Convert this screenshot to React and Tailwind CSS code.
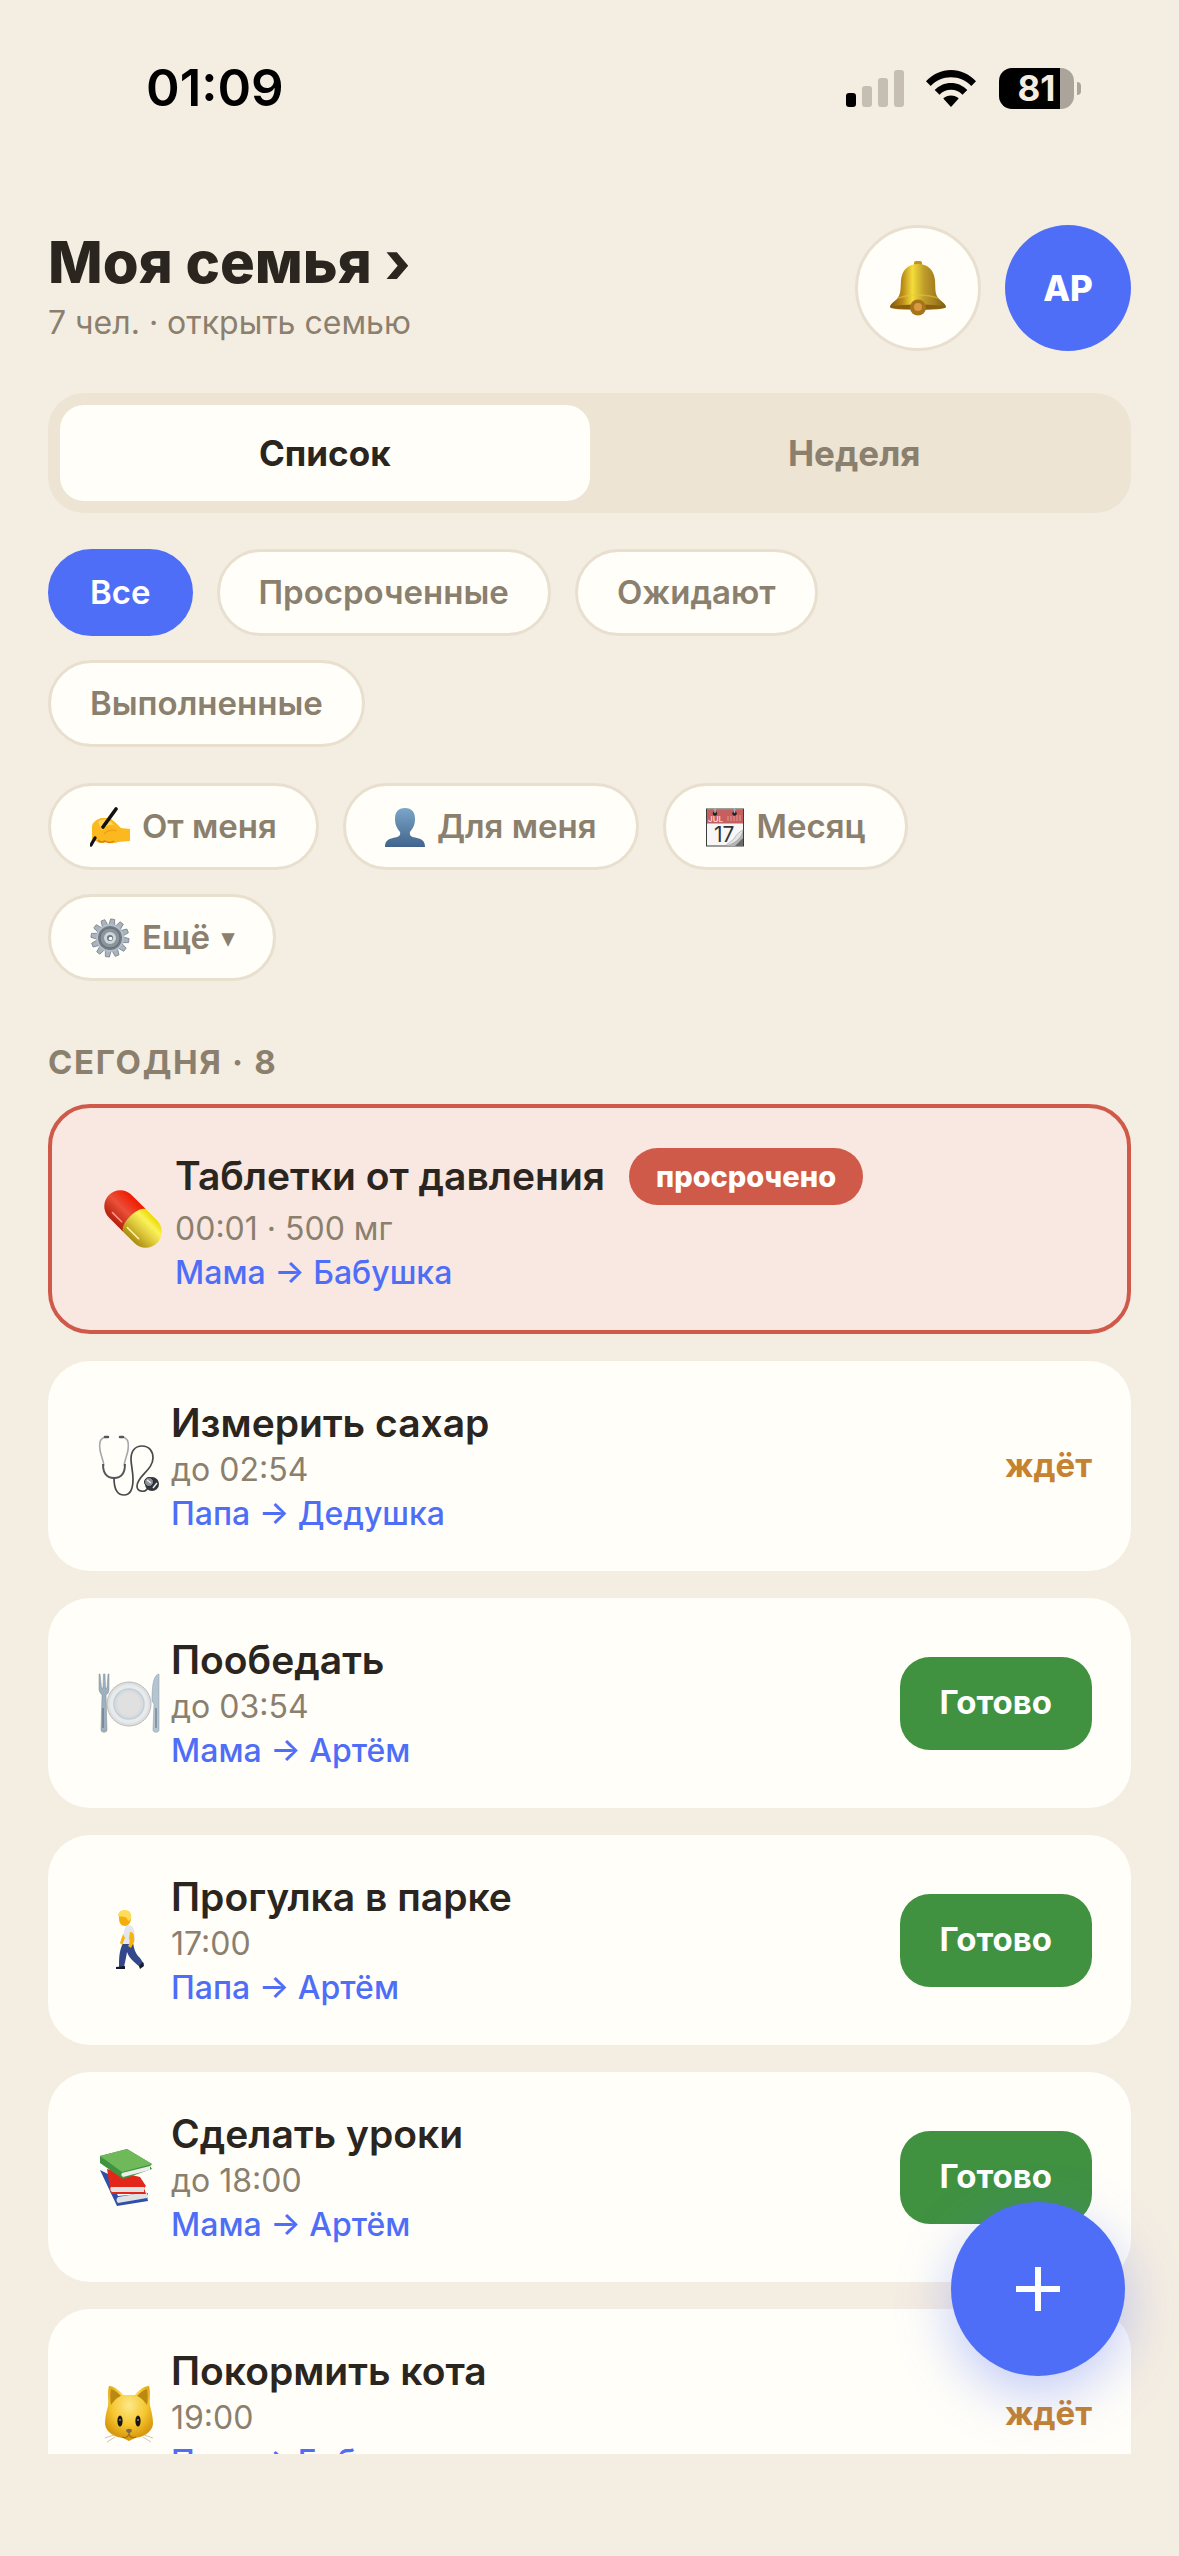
// src/App.jsx
import React, { useState } from 'react';

/* ---------- Icons ---------- */

const SignalIcon = () => (
  <svg className="w-[58px] h-[37px]" viewBox="0 0 58 37" aria-hidden="true">
    <rect x="0" y="23" width="10" height="14" rx="3" fill="#000" />
    <rect x="16" y="16" width="10" height="21" rx="3" fill="#c6beb3" />
    <rect x="32" y="8" width="10" height="29" rx="3" fill="#c6beb3" />
    <rect x="48" y="0" width="10" height="37" rx="3" fill="#c6beb3" />
  </svg>
);

const WifiIcon = () => (
  <svg className="w-[50px] h-[37px]" viewBox="0 0 50 37" aria-hidden="true">
    <path d="M0 11.2C6.8 4 15.500 0 25 0s18.200 4 25 11.200l-4.700 4.700C40 10.400 32.900 7.300 25 7.300S10 10.400 4.700 15.900z" />
    <path d="M8.700 20C13 15.500 18.700 12.900 25 12.900S37 15.500 41.300 20l-4.800 4.800C33.400 21.600 29.500 19.800 25 19.800s-8.400 1.800-11.500 5z" />
    <path d="M17.300 28.600c2-2 4.700-3.200 7.700-3.200s5.700 1.200 7.700 3.200L25 37z" />
  </svg>
);

const BellIcon = () => (
  <svg className="w-[56px] h-[56px]" viewBox="0 0 56 56" aria-hidden="true">
    <defs>
      <linearGradient id="bell" x1="0" x2="1">
        <stop offset="0" stopColor="#84560c" />
        <stop offset="0.22" stopColor="#b98a18" />
        <stop offset="0.4" stopColor="#f4dd3a" />
        <stop offset="0.62" stopColor="#bd9a28" />
        <stop offset="0.8" stopColor="#a58120" />
        <stop offset="1" stopColor="#7d5c10" />
      </linearGradient>
    </defs>
    <rect x="24" y="1" width="8" height="6" rx="2" fill="#c2941c" />
    <path d="M28 4c11 0 16 7 17 16 .6 9-.5 14 4 19 3 3 7 5 7 8 0 2-12 3-28 3S0 49 0 47c0-3 4-5 7-8 4-5 3.500-10 4-19C12 11 17 4 28 4z" fill="url(#bell)" />
    <ellipse cx="28" cy="47" rx="26" ry="2.500" fill="#8a5f10" />
    <path d="M8 38c12-4 28-4 40 0" fill="none" stroke="#e9c94a" strokeWidth="1.500" opacity="0.5" />
    <circle cx="28" cy="47.500" r="8" fill="#a8741a" />
    <circle cx="28" cy="47" r="4" fill="#d99a45" />
  </svg>
);

const WritingIcon = () => (
  <svg className="w-[40px] h-[40px]" viewBox="0 0 40 40" aria-hidden="true">
    <path d="M2 35V19c1-4 4-6 9-8h9l6 5 5 5 9 1v12l-12 1c-4 2-9 1-12 0-3 2-8 1-10-1z" fill="#fbb91f" />
    <path d="M8 15c4-3 8-3 12-1l4 4c-5-1-8 1-12 5z" fill="#ffd75a" />
    <path d="M14 27c4-4 8-5 13-3" fill="none" stroke="#f09d14" strokeWidth="1.300" />
    <path d="M8 33c2 3 5 2 7 1 3 2 6 2 9 0" fill="none" stroke="#d97f12" strokeWidth="1.500" />
    <path d="M26 2L13 20" stroke="#111" strokeWidth="3.600" strokeLinecap="round" />
    <path d="M5 31L1 38" stroke="#111" strokeWidth="3.200" strokeLinecap="round" />
  </svg>
);

const PersonIcon = () => (
  <svg className="w-[40px] h-[40px]" viewBox="0 0 40 40" aria-hidden="true">
    <defs>
      <linearGradient id="person" x1="0" y1="0" x2="0" y2="1">
        <stop offset="0" stopColor="#7ba6c9" />
        <stop offset="1" stopColor="#41648c" />
      </linearGradient>
    </defs>
    <path d="M20 1c7 0 10 4 10 11 0 6-2 9-5 13-1 4 2 5 7 6 5 1 8 3 8 9H0c0-6 3-8 8-9 5-1 8-2 7-6-3-4-5-7-5-13C10 5 13 1 20 1z" fill="url(#person)" />
  </svg>
);

const CalendarIcon = () => (
  <svg className="w-[40px] h-[40px]" viewBox="0 0 40 40" aria-hidden="true">
    <rect x="1.500" y="2" width="37" height="37" fill="#f7f7f7" stroke="#3c3c3c" />
    <rect x="2" y="2.500" width="36" height="14" fill="#c5605f" />
    <text x="3" y="15" fontSize="8" fill="#f5d5d3" fontFamily="Inter, sans-serif">JUL</text>
    <path d="M23 14V9M26 14V9M29 14V9M32 14V8M35 14V8" stroke="#d98583" strokeWidth="1.500" />
    <path d="M38 24c-3 8-9 13-18 15h18z" fill="#b4b4b4" />
    <path d="M38 23c-5 3-7 5-9 9l-9 7c10-2 17-8 18-16z" fill="#e6e6e6" stroke="#8a8a8a" strokeWidth="0.500" />
    <path d="M38 31l-8 8h8z" fill="#6a6a6a" />
    <text x="9" y="35" fontSize="21" fontWeight="400" fill="#333" fontFamily="Inter, sans-serif">17</text>
    <circle cx="10" cy="6.500" r="2.200" fill="#222" />
    <circle cx="29.500" cy="6.500" r="2.200" fill="#222" />
    <path d="M10 6V1M29.500 6V1" stroke="#9db2bb" strokeWidth="1.500" />
  </svg>
);

const teeth = [0, 30, 60, 90, 120, 150, 180, 210, 240, 270, 300, 330];

const GearIcon = () => (
  <svg className="w-[40px] h-[40px]" viewBox="0 0 40 40" aria-hidden="true">
    {teeth.map((angle) => (
      <path key={angle} d="M17 8l1-7h4l1 7z" fill="#aab4bf" stroke="#6d7681" strokeWidth="0.700" transform={`rotate(${angle + 8} 20 20)`} />
    ))}
    <circle cx="20" cy="20" r="14" fill="#b3bdc8" />
    <circle cx="20" cy="20" r="12" fill="#737b85" />
    <circle cx="20" cy="20" r="10" fill="#8b939b" stroke="#666d75" />
    <circle cx="20" cy="20" r="6" fill="#cdd5dd" />
    <circle cx="20" cy="20" r="3" fill="#6b737c" />
    <circle cx="20.500" cy="20.500" r="1.800" fill="#fff" />
  </svg>
);

const PillIcon = () => (
  <svg className="w-[60px] h-[60px]" viewBox="0 0 60 60" aria-hidden="true">
    <defs>
      <linearGradient id="pillRed" x1="0" y1="0" x2="1" y2="0">
        <stop offset="0" stopColor="#b51f0d" />
        <stop offset="0.5" stopColor="#ea5039" />
        <stop offset="1" stopColor="#f01a00" />
      </linearGradient>
      <linearGradient id="pillYellow" x1="0" y1="0" x2="1" y2="0">
        <stop offset="0" stopColor="#a98a10" />
        <stop offset="0.4" stopColor="#dcc63a" />
        <stop offset="0.75" stopColor="#fbf35a" />
        <stop offset="1" stopColor="#ecd900" />
      </linearGradient>
    </defs>
    <g transform="rotate(-45 30 30)">
      <path d="M14 32V12a16 16 0 0 1 32 0v20z" fill="url(#pillRed)" />
      <path d="M14 32c3-8 29-8 32 0v16a16 16 0 0 1-32 0z" fill="url(#pillYellow)" />
      <path d="M20 11v13" stroke="#fa9a86" strokeWidth="1.500" strokeLinecap="round" />
      <path d="M20 32v16" stroke="#fff9a8" strokeWidth="1.500" strokeLinecap="round" />
    </g>
  </svg>
);

const StethoscopeIcon = () => (
  <svg className="w-[62px] h-[62px]" viewBox="0 0 62 62" fill="none" aria-hidden="true">
    <path d="M8 2C2 3 1 7 2 15c1 6 3 9 4 16M24 2c6 1 7 5 6 13-1 6-3 9-4 16" stroke="#a6a8ae" strokeWidth="1.600" />
    <path d="M5 29c0 9 4 14 11 14s11-5 11-14" stroke="#55565a" strokeWidth="1.900" />
    <path d="M16 43c0 10 3 17 10 17s9-6 9-16c0-8-2-14-2-20 0-8 4-13 11-13s11 5 11 12c0 12-16 18-16 28 0 6 8 7 11 2" stroke="#4a4a4c" strokeWidth="1.700" />
    <path d="M7 2h3M22 2h3" stroke="#55565a" strokeWidth="2.500" strokeLinecap="round" />
    <circle cx="54" cy="49" r="7" fill="#33363b" />
    <circle cx="51" cy="47" r="4.500" fill="#8d9299" stroke="#26282c" />
    <path d="M49 45l4 3M55 53l4-5" stroke="#e9edf0" strokeWidth="1.500" />
  </svg>
);

const PlateIcon = () => (
  <svg className="w-[62px] h-[62px]" viewBox="0 0 62 62" aria-hidden="true">
    <circle cx="31" cy="32" r="22" fill="#dcdedf" stroke="#b9bcbf" />
    <circle cx="31" cy="32" r="19.500" fill="#e9eaea" />
    <circle cx="31" cy="32" r="15" fill="#d9dadb" stroke="#c0d0dd" strokeWidth="1.500" />
    <circle cx="31" cy="32" r="12" fill="#e0e0e0" />
    <path d="M1 2v15c0 3 2 5 3 6l-1 35c0 3 6 3 6 0L8 23c2-1 3-3 3-6V2h-1l-1 14H7.500L7 2H5.500L5 16H3.500L2 2z" fill="#9eb0bd" stroke="#7c8c98" strokeWidth="0.500" />
    <path d="M61 2c-5 1-7 9-7 27l2 3-1 26c0 3 6 3 6 0z" fill="#b4c5d1" stroke="#8494a0" strokeWidth="0.500" />
    <path d="M5 36v20M58 36v20" stroke="#56697a" strokeWidth="1" />
  </svg>
);

const WalkIcon = () => (
  <svg className="w-[60px] h-[60px]" viewBox="0 0 60 60" aria-hidden="true">
    <path d="M24 33l10-1c1 7 2 11 7 16l4 6-4 3c-7-6-11-9-13-15-1 6-2 10-3 15h-5c0-8 0-16 4-24z" fill="#33488a" />
    <path d="M17 57l9-1v3h-9zM40 56l4-4 1 4-4 3z" fill="#161a2c" />
    <path d="M27 16c4-2 7 0 8 4 1 6 1 9 0 14l-11 0c0-7 0-13 3-18z" fill="#e3e6ee" />
    <path d="M31 22c3 0 4 2 4 5 1 5-1 7-3 11l-3-2c2-3 2-5 1-8zM24 24l-3 9 2 2 3-7z" fill="#f6b40e" />
    <path d="M20 8c0-5 2-7 6-7s6 3 6 7c0 5-3 8-6 8-4 0-6-3-6-8z" fill="#f3ae0c" />
    <path d="M19 6c0-4 3-6 7-6 5 0 7 4 6 9l-2 2c-2-1-2-4-4-4z" fill="#ffdb58" />
  </svg>
);

const BooksIcon = () => (
  <svg className="w-[60px] h-[60px]" viewBox="0 0 60 60" aria-hidden="true">
    <path d="M1 23l8 4 10 22 30-3-1 3 1 5-31 5z" fill="#2f4fa8" />
    <path d="M19 50l29-5v6l-29 5c-2-2-2-4 0-6z" fill="#dfe1e4" />
    <path d="M8 22l33 8 6 9-2 2 2 6H12z" fill="#e2271a" />
    <path d="M12 40h33v5H13c-2-1-2-4-1-5z" fill="#e0e1e3" />
    <path d="M1 9L28 2l25 15-2 2 2 3-29 10L1 16z" fill="#3f9440" />
    <path d="M1 9L28 2l25 15-30 8z" fill="#6fb95a" />
    <path d="M23 26l28-7v4l-27 7c-2-1-2-3-1-4z" fill="#eceded" />
  </svg>
);

const CatIcon = () => (
  <svg className="w-[60px] h-[60px]" viewBox="0 0 60 60" aria-hidden="true">
    <defs>
      <radialGradient id="cat" cx="0.500" cy="0.350" r="0.600">
        <stop offset="0" stopColor="#fde98a" />
        <stop offset="0.6" stopColor="#f6c62f" />
        <stop offset="1" stopColor="#d9990e" />
      </radialGradient>
    </defs>
    <path d="M10 2c5 0 11 5 14 9h12c3-4 9-9 14-9 2 7 0 14 1 20 2 7 3 12 3 18-1 9-10 13-18 14l-6 3-6-3C16 53 7 49 6 40c0-6 1-11 3-18 1-6-1-13 1-20z" fill="url(#cat)" />
    <path d="M12 5c4 1 7 4 10 7-5 2-7 5-10 9-1-5-1-11 0-16zM48 5c-4 1-7 4-10 7 5 2 7 5 10 9 1-5 1-11 0-16z" fill="#b98a12" />
    <ellipse cx="21" cy="37" rx="2.600" ry="5.500" fill="#191510" />
    <ellipse cx="39" cy="37" rx="2.600" ry="5.500" fill="#191510" />
    <circle cx="21" cy="36" r="0.900" fill="#8b93a0" />
    <circle cx="39" cy="36" r="0.900" fill="#8b93a0" />
    <path d="M27 47c0-3 6-3 6 0l-3 3z" fill="#80694a" />
    <path d="M30 50c-1 4-5 4-7 3M30 50c1 4 5 4 7 3" fill="none" stroke="#a5720b" strokeWidth="1.200" />
    <path d="M15 51L6 54M16 53L8 58M45 51l9 3M44 53l8 5" stroke="#c7b998" strokeWidth="0.800" />
  </svg>
);

/* ---------- Data ---------- */

const STATUS_FILTERS = ['Все', 'Просроченные', 'Ожидают', 'Выполненные'];

const SCOPE_FILTERS = [
  { label: 'От меня', icon: WritingIcon },
  { label: 'Для меня', icon: PersonIcon },
  { label: 'Месяц', icon: CalendarIcon },
  { label: 'Ещё', icon: GearIcon, more: true },
];

const TASKS = [
  { title: 'Таблетки от давления', time: '00:01 · 500 мг', route: 'Мама → Бабушка', icon: PillIcon, status: 'overdue' },
  { title: 'Измерить сахар', time: 'до 02:54', route: 'Папа → Дедушка', icon: StethoscopeIcon, status: 'waiting' },
  { title: 'Пообедать', time: 'до 03:54', route: 'Мама → Артём', icon: PlateIcon, status: 'ready' },
  { title: 'Прогулка в парке', time: '17:00', route: 'Папа → Артём', icon: WalkIcon, status: 'ready' },
  { title: 'Сделать уроки', time: 'до 18:00', route: 'Мама → Артём', icon: BooksIcon, status: 'ready' },
  { title: 'Покормить кота', time: '19:00', route: 'Папа → Бабушка', icon: CatIcon, status: 'waiting' },
];

/* ---------- Parts ---------- */

const StatusBar = () => (
  <div className="flex items-center justify-between pt-[66px] pb-[115px] pl-[146px] pr-[98px] text-black">
    <span className="text-[51px] leading-[44px] font-semibold">01:09</span>
    <div className="flex items-center">
      <SignalIcon />
      <div className="ml-[22px]">
        <WifiIcon />
      </div>
      <div className="ml-[23px] flex h-[41px] w-[75px] items-center justify-center rounded-[13px] bg-linear-to-r from-black from-81% to-[#aaa49b] to-81% text-[35px] leading-[41px] font-bold text-[#f4ede2]">
        81
      </div>
      <div className="ml-[3px] h-[13px] w-1 rounded-r-full bg-[#aaa49b]" />
    </div>
  </div>
);

const Chip = ({ active, onClick, children }) => (
  <button
    onClick={onClick}
    aria-pressed={active}
    className={`flex h-[87px] items-center rounded-full border-3 px-[39px] text-[33px] font-semibold ${
      active ? 'border-[#4f6ef7] bg-[#4f6ef7] text-white' : 'border-[#e8dfcf] bg-[#fffef9] text-[#8b7f6e]'
    }`}
  >
    {children}
  </button>
);

const TaskCard = ({ task }) => {
  const Icon = task.icon;
  const overdue = task.status === 'overdue';

  return (
    <li
      className={`flex items-center rounded-[42px] px-[39px] py-9 ${
        overdue ? 'border-4 border-[#d05a4a] bg-[#f8e8e1]' : 'bg-[#fffef9]'
      }`}
    >
      <div className="flex w-[84px] shrink-0 justify-center">
        <Icon />
      </div>
      <div className="flex flex-1 flex-col gap-[2px] pt-[2px]">
        <div className={`flex items-center gap-6 ${overdue ? 'min-h-[60px]' : ''}`}>
          <h3 className="text-[39px] leading-[48px] font-semibold text-[#2b2520]">{task.title}</h3>
          {overdue && (
            <span className="rounded-full bg-[#d05a4a] px-[27px] py-[9px] text-[29px] leading-[39px] font-extrabold text-white">
              просрочено
            </span>
          )}
        </div>
        <p className="text-[32px] leading-[42px] text-[#8b7f6e]">{task.time}</p>
        <p className="text-[32px] leading-[42px] font-medium text-[#4f6ef7]">{task.route}</p>
      </div>
      {task.status === 'waiting' && <span className="text-[33px] font-bold text-[#c5822f]">ждёт</span>}
      {task.status === 'ready' && (
        <button className="h-[93px] rounded-[30px] bg-[#409241] px-10 text-[33px] font-bold text-white">Готово</button>
      )}
    </li>
  );
};

/* ---------- Screen ---------- */

const App = () => {
  const [tab, setTab] = useState('list');
  const [filter, setFilter] = useState('Все');

  const tabClass = (name) =>
    `h-24 flex-1 rounded-3xl text-[35px] font-bold ${tab === name ? 'bg-[#fffef9] text-[#2b2520]' : 'text-[#8b7f6e]'}`;

  return (
    <div className="relative flex h-screen flex-col bg-[#f4ede2] pb-[102px] font-['Inter',sans-serif]">
      <StatusBar />

      <main className="min-h-0 flex-1 overflow-hidden px-12">
        {/* Header */}
        <header className="flex h-[126px] items-center justify-between">
          <a href="#family" className="flex flex-col gap-[10px]">
            <h1 className="text-[58px] leading-[60px] font-extrabold text-[#2b2520]">Моя семья ›</h1>
            <p className="text-[32px] leading-[42px] text-[#8b7f6e]">7 чел. · открыть семью</p>
          </a>
          <div className="flex gap-6">
            <button
              aria-label="Уведомления"
              className="flex size-[126px] items-center justify-center rounded-full border-3 border-[#e8dfcf] bg-[#fffef9]"
            >
              <BellIcon />
            </button>
            <button className="size-[126px] rounded-full bg-[#4f6ef7] text-[35px] font-extrabold text-white">AP</button>
          </div>
        </header>

        {/* View switch */}
        <div className="mt-[42px] flex rounded-[36px] bg-[#ede4d4] p-3">
          <button className={tabClass('list')} onClick={() => setTab('list')}>Список</button>
          <button className={tabClass('week')} onClick={() => setTab('week')}>Неделя</button>
        </div>

        {/* Filters */}
        <div className="mt-9 flex flex-wrap gap-6">
          {STATUS_FILTERS.map((name) => (
            <Chip key={name} active={filter === name} onClick={() => setFilter(name)}>
              {name}
            </Chip>
          ))}
        </div>
        <div className="mt-9 flex flex-wrap gap-6">
          {SCOPE_FILTERS.map(({ label, icon: Icon, more }) => (
            <Chip key={label}>
              <Icon />
              <span className="ml-3">{label}</span>
              {more && <span className="ml-3 text-[24px]">▾</span>}
            </Chip>
          ))}
        </div>

        {/* Tasks */}
        <h2 className="mt-[60px] mb-[21px] text-[33px] leading-[42px] font-bold tracking-wider text-[#8b7f6e]">СЕГОДНЯ · 8</h2>
        <ul className="flex flex-col gap-[27px]">
          {TASKS.map((task) => (
            <TaskCard key={task.title} task={task} />
          ))}
        </ul>
      </main>

      {/* Add task */}
      <button
        aria-label="Добавить задачу"
        className="absolute right-[54px] bottom-[180px] flex size-[174px] items-center justify-center rounded-full bg-[#4f6ef7] shadow-[0_18px_54px_rgba(79,110,247,0.35)]"
      >
        <svg className="size-[44px]" viewBox="0 0 44 44" stroke="#fff" strokeWidth="6" aria-hidden="true">
          <path d="M22 0v44M0 22h44" />
        </svg>
      </button>
    </div>
  );
};

export default App;
